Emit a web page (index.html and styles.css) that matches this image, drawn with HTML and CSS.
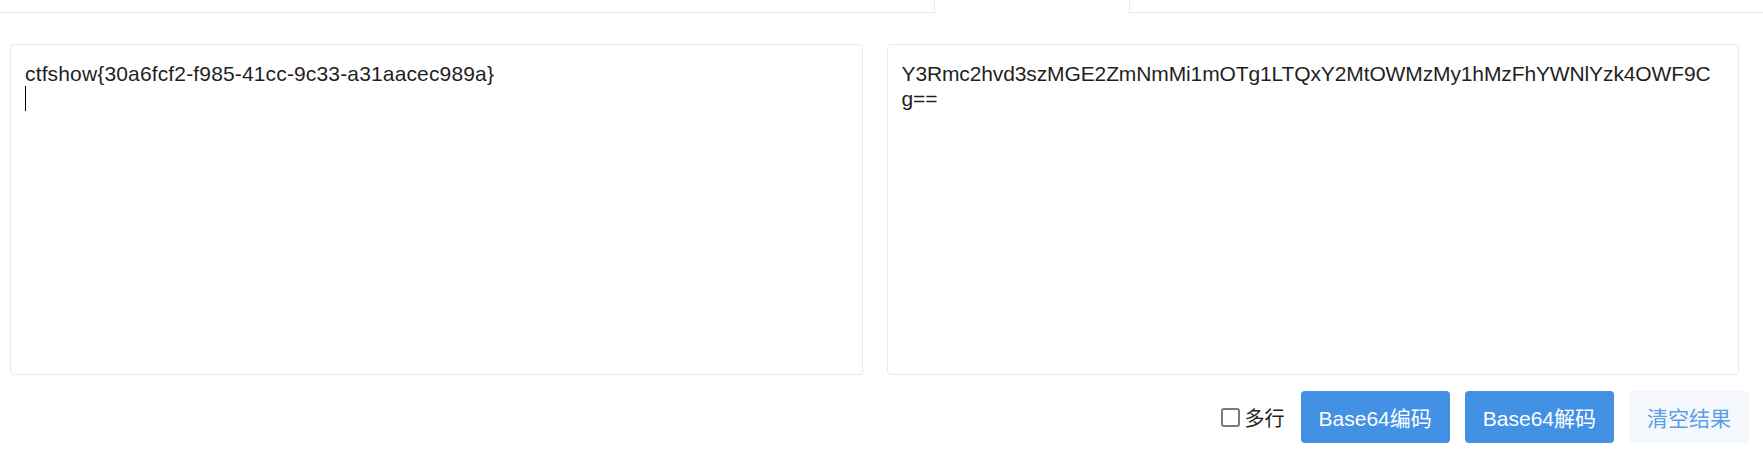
FILE: index.html
```html
<!DOCTYPE html>
<html lang="zh-CN">
<head>
<meta charset="utf-8">
<title>Base64</title>
<link rel="stylesheet" href="styles.css">
</head>
<body>
<div class="tabs">
  <div class="tab tab-left"></div>
  <div class="tab tab-active"></div>
  <div class="tab tab-right"></div>
</div>
<main class="page">
  <div class="editors">
    <div class="editor editor-input"><div class="editor-text">ctfshow{30a6fcf2-f985-41cc-9c33-a31aacec989a}</div><span class="caret"></span></div>
    <div class="editor editor-output"><div class="editor-text">Y3Rmc2hvd3szMGE2ZmNmMi1mOTg1LTQxY2MtOWMzMy1hMzFhYWNlYzk4OWF9C</div><div class="editor-text">g==</div></div>
  </div>
  <div class="toolbar">
    <label class="check"><input type="checkbox" class="check-box"><span>多行</span></label>
    <button class="btn btn-primary">Base64编码</button>
    <button class="btn btn-primary">Base64解码</button>
    <button class="btn btn-light">清空结果</button>
  </div>
</main>
</body>
</html>
```
FILE: styles.css
```css
* { box-sizing: border-box; }
html, body { background: #fff; }
body {
  margin: 0;
  font-family: "Liberation Sans", "Noto Sans CJK SC", sans-serif;
  color: #1f1f1f;
}
.tabs {
  display: flex;
  height: 13px;
}
.tab { height: 13px; }
.tab-left {
  width: 935px;
  border-right: 1px solid #e6e8ec;
  border-bottom: 1px solid #e6e8ec;
}
.tab-active { width: 194px; }
.tab-right {
  flex: 1;
  border-left: 1px solid #e6e8ec;
  border-bottom: 1px solid #e6e8ec;
}
.page {
  padding: 31px 14px 0 10px;
}
.editors {
  display: grid;
  grid-template-columns: 1fr 1fr;
  column-gap: 24px;
  margin-right: 10px;
}
.editor {
  height: 331px;
  border: 1px solid #e8e9ec;
  border-radius: 4px;
  padding: 16px 14px;
  font-size: 21px;
  line-height: 25px;
  background: #fff;
}
.editor-input { letter-spacing: 0.15px; }
.editor-output { letter-spacing: -0.12px; }
.editor-text {
  white-space: pre-wrap;
  word-break: break-all;
}
.caret {
  display: block;
  width: 1px;
  height: 25px;
  background: #000;
}
.toolbar {
  margin-top: 16px;
  display: flex;
  justify-content: flex-end;
  align-items: center;
  gap: 15px;
}
.check {
  display: flex;
  align-items: center;
  gap: 5px;
  margin-right: 1px;
  font-size: 20px;
  color: #1f1f1f;
  font-family: "Noto Sans CJK SC", sans-serif;
}
.check-box {
  appearance: none;
  -webkit-appearance: none;
  margin: 0;
  width: 19px;
  height: 19px;
  border: 2px solid #7a7a7a;
  border-radius: 3px;
  background: #fff;
}
.btn {
  height: 52px;
  padding: 0 18px;
  border: none;
  border-radius: 4px;
  font-family: "Liberation Sans", "Noto Sans CJK SC", sans-serif;
  font-size: 21px;
  cursor: pointer;
}
.btn-primary {
  background: #4391e4;
  color: #fff;
}
.btn-light {
  background: #f4f8fd;
  color: #5c9de6;
}
```
